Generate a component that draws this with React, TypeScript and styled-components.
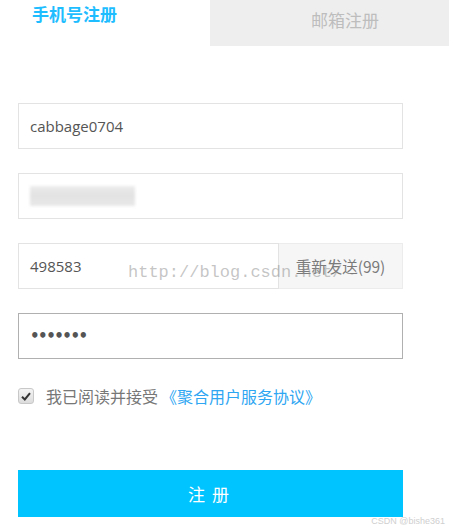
import React from "react";
import styled, { createGlobalStyle } from "styled-components";

const Global = createGlobalStyle`
  html, body { margin: 0; padding: 0; background: #fff; }
  body { font-family: "Open Sans", "Noto Sans CJK SC", sans-serif; }
`;

const Page = styled.div`
  position: relative;
  width: 449px;
  height: 532px;
  overflow: hidden;
  background: #fff;
`;

const Tabs = styled.div`
  display: flex;
  height: 46px;
`;

const Tab = styled.div<{ $active?: boolean }>`
  box-sizing: border-box;
  display: flex;
  align-items: flex-start;
  font-family: "Noto Sans CJK SC", sans-serif;
  font-size: 17px;
  line-height: 20px;
  ${(p) =>
    p.$active
      ? `width: 210px; background: #fff; color: #1ebdff; font-weight: 700; padding: 4px 0 0 32px;`
      : `flex: 1; background: #eeeeee; color: #bdbdbd; padding: 10px 0 0 101px;`}
`;

const Form = styled.div`
  display: flex;
  flex-direction: column;
  padding: 57px 0 0 18px;
  width: 385px;
`;

const Field = styled.div<{ $focused?: boolean; $gap?: number }>`
  box-sizing: border-box;
  height: 46px;
  margin-bottom: ${(p) => p.$gap ?? 24}px;
  border: 1px solid ${(p) => (p.$focused ? "#b0b0b0" : "#e3e3e3")};
  display: flex;
  align-items: center;
  padding-left: 11px;
  font-size: 15px;
  color: #555;
`;

const CodeRow = styled.div`
  display: flex;
  height: 46px;
  margin-bottom: 24px;
`;

const CodeField = styled(Field)`
  width: 261px;
  margin-bottom: 0;
`;

const ResendButton = styled.div`
  box-sizing: border-box;
  flex: 1;
  height: 46px;
  border: 1px solid #ececec;
  border-left: none;
  background: #f6f6f6;
  color: #7a7a7a;
  display: flex;
  align-items: center;
  justify-content: center;
  font-family: "Noto Sans CJK SC", sans-serif;
  font-size: 15.5px;
`;

const Blur = styled.div`
  width: 105px;
  height: 20px;
  background: linear-gradient(180deg, #ececec 0%, #e2e2e2 45%, #e8e8e8 100%);
  filter: blur(1.5px);
`;

const Dots = styled.span`
  font-size: 15px;
  letter-spacing: -1.5px;
  color: #555;
  font-family: "DejaVu Sans", sans-serif;
  font-weight: 700;
`;

const AgreeRow = styled.label`
  display: flex;
  align-items: center;
  height: 18px;
  margin-bottom: 65px;
  font-family: "Noto Sans CJK SC", sans-serif;
  font-size: 16px;
  color: #777;
`;

const CheckBox = styled.span`
  box-sizing: border-box;
  width: 16px;
  height: 16px;
  border: 1px solid #c8c8c8;
  border-radius: 3px;
  background: linear-gradient(#f4f4f4, #dcdcdc);
  display: flex;
  align-items: center;
  justify-content: center;
  margin-right: 12px;
`;

const Link = styled.span`
  color: #2ea6f2;
  margin-left: 3px;
`;

const Submit = styled.div`
  height: 47px;
  background: #00c4ff;
  color: #fff;
  display: flex;
  align-items: center;
  justify-content: center;
  font-family: "Noto Sans CJK SC", sans-serif;
  font-size: 17px;
  letter-spacing: 7px;
  text-indent: 3px;
`;

const UrlMark = styled.div`
  position: absolute;
  left: 128px;
  top: 263px;
  z-index: 2;
  font-family: "Liberation Mono", monospace;
  font-size: 17px;
  color: rgba(140, 140, 140, 0.5);
  pointer-events: none;
`;

const Credit = styled.div`
  position: absolute;
  right: 4px;
  bottom: 6px;
  font-family: "Liberation Sans", sans-serif;
  font-size: 9px;
  color: #cfcfcf;
`;

export default function App() {
  return (
    <Page>
      <Global />
      <Tabs>
        <Tab $active>手机号注册</Tab>
        <Tab>邮箱注册</Tab>
      </Tabs>
      <Form>
        <Field>cabbage0704</Field>
        <Field>
          <Blur />
        </Field>
        <CodeRow>
          <CodeField>498583</CodeField>
          <ResendButton>重新发送(99)</ResendButton>
        </CodeRow>
        <Field $focused $gap={28}>
          <Dots>•••••••</Dots>
        </Field>
        <AgreeRow>
          <CheckBox>
            <svg width="10" height="9" viewBox="0 0 10 9">
              <path d="M1 4.8 L3.8 7.5 L9 1.2" fill="none" stroke="#333" strokeWidth="2" />
            </svg>
          </CheckBox>
          我已阅读并接受<Link>《聚合用户服务协议》</Link>
        </AgreeRow>
        <Submit>注册</Submit>
      </Form>
      <UrlMark>http://blog.csdn.net/</UrlMark>
      <Credit>CSDN @bishe361</Credit>
    </Page>
  );
}
